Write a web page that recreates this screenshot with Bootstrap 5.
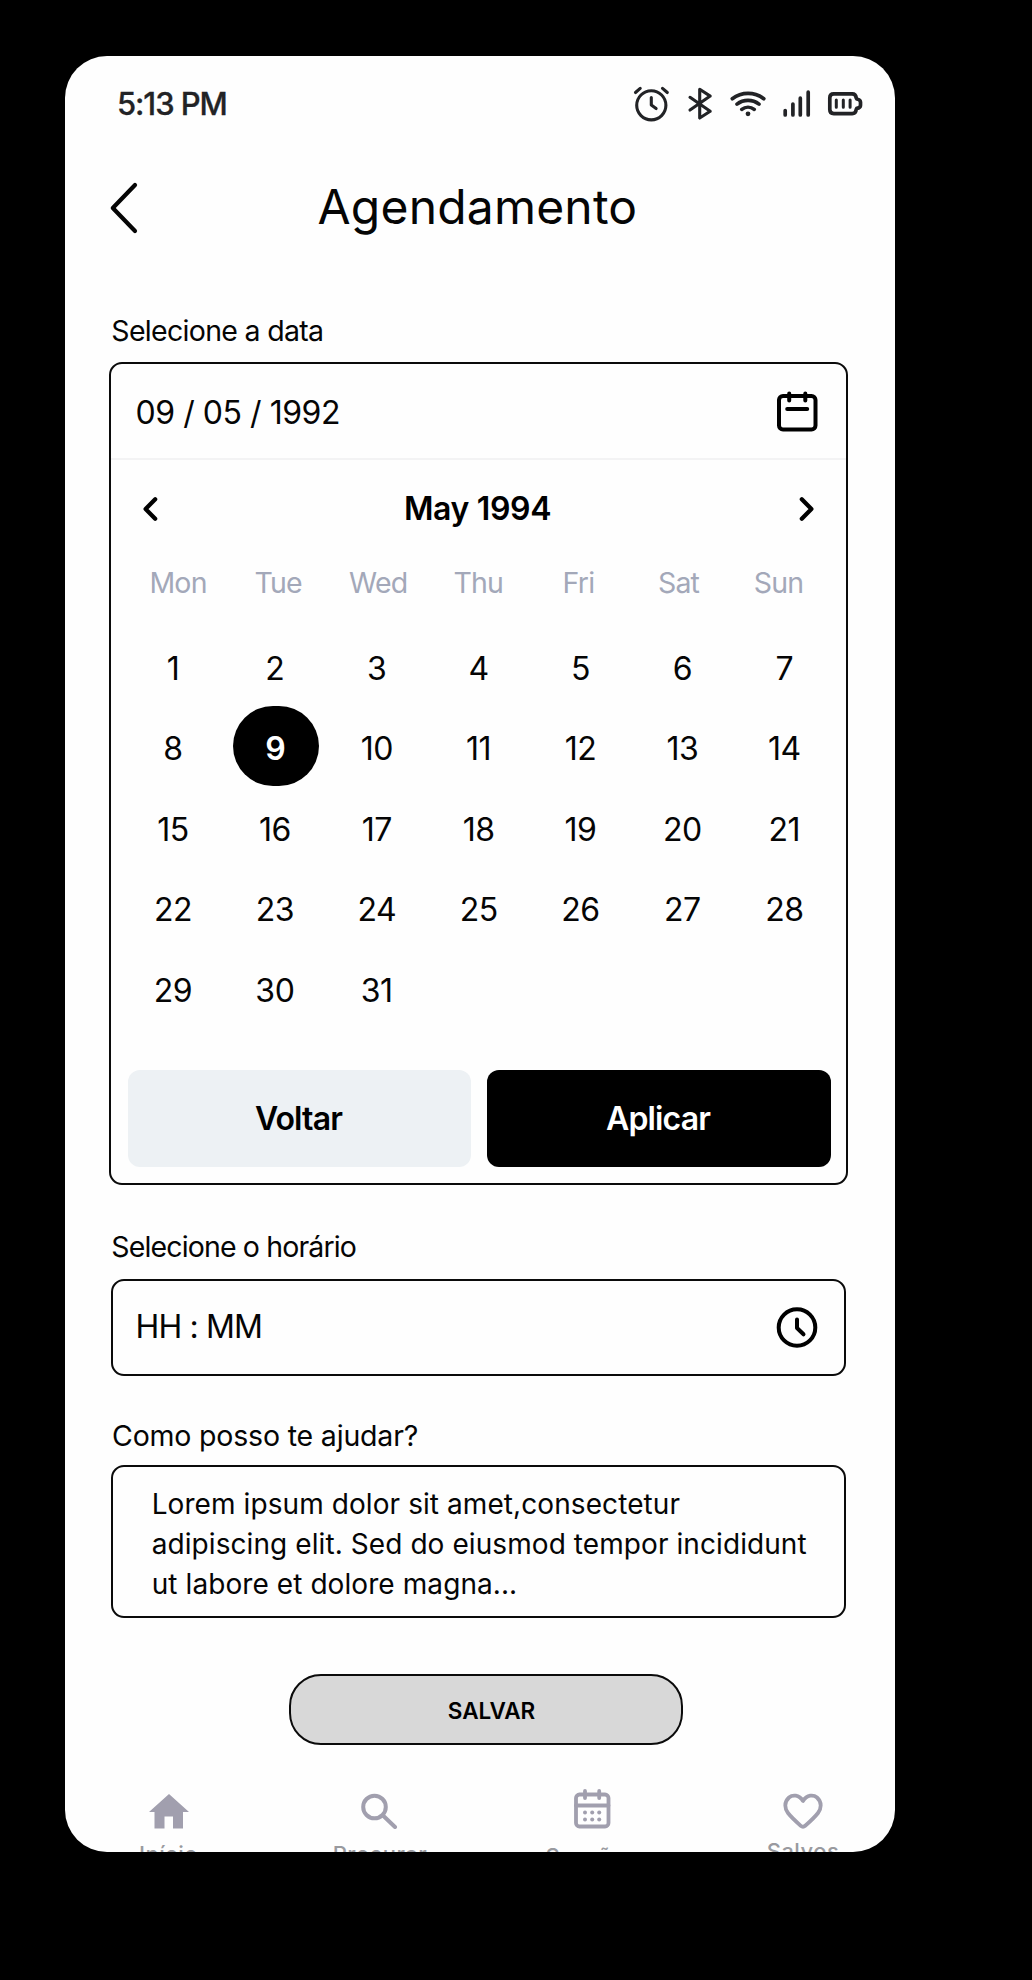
<!DOCTYPE html>
<html lang="pt-BR">
<head>
<meta charset="utf-8">
<meta name="viewport" content="width=device-width, initial-scale=1">
<title>Agendamento</title>
<link href="https://cdn.jsdelivr.net/npm/bootstrap@5.3.0/dist/css/bootstrap.min.css" rel="stylesheet">
<style>
  body { background: #000; font-family: Inter, "Liberation Sans", sans-serif; color: #050505; padding: 56px 0 0 65px; }
  svg { display: block; flex: none; fill: none; stroke-linecap: round; stroke-linejoin: round; }
  .phone { width: 829.5px; height: 1795.5px; border-radius: 42px; background: #fefefe; }
  .status-bar { height: 95px; padding: 0 31px 0 52px; color: #222326; }
  .clock-text { font-size: 31px; font-weight: 500; letter-spacing: -1.1px; line-height: 40px; padding-top: 1px; -webkit-text-stroke: .3px #222326; }
  .status-icons svg { stroke: #222326; }
  .title-bar { height: 112px; padding: 0 0 0 43.5px; }
  .title-bar h1 { font-size: 48px; font-weight: 400; letter-spacing: .2px; line-height: 60px; margin-left: 179px; }
  .form-area { padding: 48px 47px 0 44px; }
  .field-label { font-size: 28.5px; line-height: 40px; height: 40px; white-space: nowrap; padding-left: 2.3px; }
  .tight-a { letter-spacing: -.69px; }
  .tight-b { letter-spacing: -.86px; margin-top: 42px; }
  .tight-c { letter-spacing: -.18px; margin-top: 40px; padding-left: 3px; }
  .outlined { border: 2px solid #0b0b0b; border-radius: 13px; }
  .picker { height: 823px; margin-top: 11px; width: 739px; }
  .date-row { height: 96px; padding: 4px 28px 0 24.5px; border-bottom: 2px solid #f3f3f4; font-size: 32px; letter-spacing: -.46px; }
  .date-row svg { margin-bottom: 5px; }
  .month-row { height: 98px; padding: 0 32px 1px 32px; font-size: 32px; font-weight: 600; letter-spacing: -.35px; color: #000; }
  .month-row span { margin-right: 2px; }
  .cells { display: grid; text-align: center; }
  .weekdays { grid-template-columns: repeat(7, 100.1px); height: 50px; line-height: 49.5px; margin-left: 17px; font-size: 28.5px; letter-spacing: -.8px; color: #a3a8b9; }
  .days { grid-template-columns: repeat(7, 101.9px); grid-auto-rows: 80.5px; margin: 20.5px 0 0 11px; line-height: 80.5px; font-size: 32px; letter-spacing: -.5px; }
  .day-on { background: #000; color: #fff; font-weight: 600; border-radius: 40px; width: 86px; height: 80px; line-height: 85px; margin: -3px 0 0 9.2px; padding-right: 1.5px; }
  .actions { padding: 0 15.5px 0 16.5px; gap: 16px; margin-top: 39px; }
  .actions .btn { height: 97px; border: 0; border-radius: 12px; font-size: 32px; font-weight: 600; letter-spacing: -.85px; padding: 0 1.5px 0 0; }
  .btn-back { background: #edf1f4; color: #000; }
  .btn-apply { background: #000; color: #fff; }
  .time-box { height: 97px; width: 735px; margin: 12px 0 0 2px; padding: 0 26px 1px 22.5px; font-size: 32px; letter-spacing: -.85px; }
  .help-box { height: 153px; width: 735px; margin: 9px 0 0 2px; padding: 16.5px 0 0 38.7px; font-size: 28px; line-height: 40.2px; white-space: nowrap; letter-spacing: .08px; }
  .btn-save { width: 394px; height: 71px; margin: 56px 0 0 180px; border: 2px solid #0b0b0b; border-radius: 32px; background: #d8d8d8; color: #000; font-size: 22.5px; font-weight: 600; letter-spacing: -.05px; padding: 2px 0 0 11px; }
  .tab-bar { height: 106.5px; padding: 44px 0 0 43.5px; }
  .tab-item { width: 120px; margin-right: 91.5px; color: #a19fae; font-size: 22px; font-weight: 500; line-height: 24px; letter-spacing: .45px; flex: none; }
  .tab-item svg { height: 40px; }
  .tab-item span { color: #999a9f; }
  .tab-item .drop-0 { margin-top: 10px; }
  .tab-item .drop-1 { margin-top: 12.5px; }
  .tab-item .drop-2 { margin-top: 15px; }
</style>
</head>
<body>
<main class="phone overflow-hidden">
  <header class="status-bar d-flex align-items-center justify-content-between">
    <span class="clock-text">5:13 PM</span>
    <div class="status-icons d-flex align-items-center">
      <svg width="236" height="40" viewBox="0 0 236 40">
        <g stroke-width="3.100">
          <circle cx="23.3" cy="21.3" r="14.6"/><path d="M23.300 13.5v7.500l4.800 3.500M7.500 8.500l4.700-4.200M34.500 4.300L39.300 8.500"/>
          <path d="M62 13.300L82.200 27.300 71.700 34V5.300L82.200 12.100 62 26.100"/>
        </g>
        <g stroke-width="3.700">
          <path d="M104.300 14.700a26 26 0 0 1 31.500 0M109 20.100a18 18 0 0 1 22 0M113.800 25.400a10 10 0 0 1 12.400 0"/>
          <path d="M157.200 26.500v4.500M164.900 20v11M172.300 14.200v16.800M180.200 8.200v22.800"/>
          <path d="M205.800 9.800h18.400q3.600 0 4 4l.600 1.200q3.700.600 3.700 3.200v3q0 2.600-3.700 3.200l-.6 1.200q-.4 4-4 4h-18.400q-4 0-4-4V13.800q0-4 4-4Z"/>
          <path stroke-width="3" d="M208.300 16v7.200M215.300 16v7.200M222.100 16v7.200"/>
        </g>
        <circle cx="120" cy="29.800" r="2.400" fill="#222326" stroke="none"/>
      </svg>
    </div>
  </header>

  <div class="title-bar d-flex align-items-center">
    <svg width="30" height="54" viewBox="0 0 30 54" stroke="#050505" stroke-width="4.200"><path d="M26 5L3.800 28 26 51"/></svg>
    <h1 class="mb-0">Agendamento</h1>
  </div>

  <section class="form-area">
    <div class="field-label tight-a">Selecione a data</div>
    <div class="picker outlined">
      <div class="date-row d-flex align-items-center justify-content-between">
        <span>09 / 05 / 1992</span>
        <svg width="42" height="42" viewBox="0 0 42 42" stroke="#000" stroke-width="4"><rect x="3" y="6" width="36.500" height="33.500" rx="4"/><path d="M13.200 3.500v7M29.300 3.500v7M11.200 19h20"/></svg>
      </div>
      <div class="month-row d-flex align-items-center justify-content-between">
        <svg width="16" height="26" viewBox="0 0 16 26" stroke="#000" stroke-width="4.200"><path d="M12.200 3.200L2.600 13l9.600 9.800"/></svg>
        <span>May 1994</span>
        <svg width="16" height="26" viewBox="0 0 16 26" stroke="#000" stroke-width="4.200"><path d="M3.800 3.200L13.400 13l-9.600 9.800"/></svg>
      </div>
      <div class="cells weekdays"><span>Mon</span><span>Tue</span><span>Wed</span><span>Thu</span><span>Fri</span><span>Sat</span><span>Sun</span></div>
      <div class="cells days">
        <span>1</span><span>2</span><span>3</span><span>4</span><span>5</span><span>6</span><span>7</span>
        <span>8</span><span class="day-on">9</span><span>10</span><span>11</span><span>12</span><span>13</span><span>14</span>
        <span>15</span><span>16</span><span>17</span><span>18</span><span>19</span><span>20</span><span>21</span>
        <span>22</span><span>23</span><span>24</span><span>25</span><span>26</span><span>27</span><span>28</span>
        <span>29</span><span>30</span><span>31</span>
      </div>
      <div class="actions d-flex">
        <button class="btn btn-back flex-fill w-50">Voltar</button>
        <button class="btn btn-apply flex-fill w-50">Aplicar</button>
      </div>
    </div>

    <div class="field-label tight-b">Selecione o horário</div>
    <div class="time-box outlined d-flex align-items-center justify-content-between">
      <span>HH : MM</span>
      <svg width="42" height="42" viewBox="0 0 42 42" stroke="#000" stroke-width="4"><circle cx="21" cy="21.500" r="18.300"/><path d="M21 13.500v8.500l6.500 6.300"/></svg>
    </div>

    <div class="field-label tight-c">Como posso te ajudar?</div>
    <div class="help-box outlined">Lorem ipsum dolor sit amet,consectetur<br>adipiscing elit. Sed do eiusmod tempor incididunt<br>ut labore et dolore magna...</div>
    <button class="btn btn-save">SALVAR</button>
  </section>

  <nav class="tab-bar d-flex overflow-hidden">
    <div class="tab-item d-flex flex-column align-items-center">
      <svg width="40" viewBox="0 0 40 40"><path d="M20 5L0 23h5.500v16.500h10V27.500h8.500v12h10V23H40Z" fill="currentColor"/></svg>
      <span class="drop-1">Início</span>
    </div>
    <div class="tab-item d-flex flex-column align-items-center">
      <svg width="40" viewBox="0 0 40 40" stroke="currentColor" stroke-width="4"><circle cx="14.500" cy="18" r="11.300"/><path d="M23 26.500L35 38"/></svg>
      <span class="drop-1">Procurar</span>
    </div>
    <div class="tab-item d-flex flex-column align-items-center">
      <svg width="40" viewBox="0 0 40 40" stroke="currentColor" stroke-width="3.800"><rect x="4" y="5.500" width="32.500" height="32" rx="3.500"/><path d="M4 16.500h32.500M13 2v7M27.200 2v7"/><g fill="currentColor" stroke="none"><circle cx="13" cy="23.500" r="2"/><circle cx="20.200" cy="23.500" r="2"/><circle cx="27.200" cy="23.500" r="2"/><circle cx="13" cy="30.500" r="2"/><circle cx="20.200" cy="30.500" r="2"/><circle cx="27.200" cy="30.500" r="2"/></g></svg>
      <span class="drop-2">Sessões</span>
    </div>
    <div class="tab-item d-flex flex-column align-items-center me-0">
      <svg width="40" viewBox="0 0 40 40" stroke="currentColor" stroke-width="3.800"><path d="M20 12C16 5.500 9.500 5.500 6 8.500 1 13 1.500 19.500 5 24c3.500 4.500 8.500 9 12.800 12.800q2.200 1.900 4.400 0C26.500 33 31.500 28.500 35 24c3.500-4.500 4-11-1-15.500-3.500-3-10-3-14 3.500Z"/></svg>
      <span class="drop-0">Salvos</span>
    </div>
  </nav>
</main>
<script src="https://cdn.jsdelivr.net/npm/bootstrap@5.3.0/dist/js/bootstrap.bundle.min.js"></script>
</body>
</html>
